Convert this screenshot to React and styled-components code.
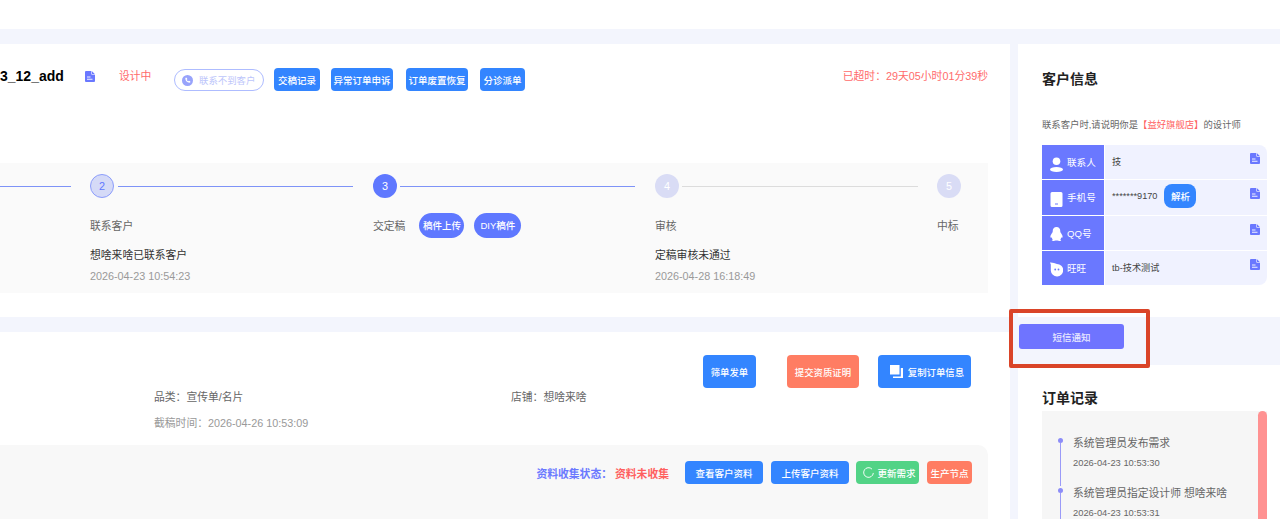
import React from "react";
import styled, { createGlobalStyle } from "styled-components";

const Global = createGlobalStyle`
  html, body { margin: 0; padding: 0; background: #f3f5fd; }
  body { width: 1280px; height: 519px; overflow: hidden; font-family: "Liberation Sans", "Noto Sans CJK SC", sans-serif; font-size: 10.8px; color: #333; }
  * { box-sizing: border-box; }
`;

const Page = styled.div`position: relative; width: 1280px; height: 519px; overflow: hidden;`;
const TopBar = styled.div`height: 29px; background: #fff; margin-bottom: 15px;`;
const Main = styled.div`display: grid; grid-template-columns: 1010px 262px; column-gap: 8px; width: 1280px;`;
const Column = styled.div`display: flex; flex-direction: column;`;
const LeftCard = styled.section`background: #fff; height: ${p => p.$h}px; margin-bottom: 15px;`;

const Header = styled.div`display: flex; align-items: flex-start; height: 119px; padding: 24px 22px 0 0;`;
const Title = styled.div`font-size: 14px; font-weight: 700; color: #000; line-height: 14px; margin-top: 1px; width: 85px;`;
const DocBox = styled.svg`width: 10px; height: 11px; fill: #6a78ff; display: block; flex: none;`;
const HeaderDoc = styled(DocBox)`margin-top: 3px;`;
const RowDoc = styled(DocBox)`position: absolute; right: 7px; top: 8px;`;
const Status = styled.div`color: #ff6b6b; font-size: 10.8px; line-height: 14px; margin: 1px 0 0 24px; width: 55px;`;
const Pill = styled.div`
  display: flex; align-items: center; gap: 6px; width: 90px; height: 22px; margin-top: 1px; padding-left: 7px;
  border: 1px solid #aebcff; border-radius: 11px; color: #bcc5fb; font-size: 9.4px; white-space: nowrap;
`;
const HeaderBtn = styled.button`
  height: 23px; margin-left: ${p => p.$ml}px; padding: 0; width: ${p => p.$w}px; border: 0; border-radius: 4px;
  background: #3385ff; color: #fff; font: inherit; font-size: 9.5px; font-weight: 500; white-space: nowrap;
`;
const Timer = styled.div`margin: 1px 0 0 auto; color: #ff6b6b; font-size: 10.8px; line-height: 14px;`;

const StepsPanel = styled.div`display: flex; width: 988px; height: 130px; background: #fafafa; padding-top: 11px;`;
const Step = styled.div`flex: none; width: ${p => p.$w}px;`;
const StepHead = styled.div`display: flex; align-items: center; height: 24px;`;
const Circle = styled.div`
  flex: none; width: 24px; height: 24px; border-radius: 50%; display: flex; align-items: center; justify-content: center;
  font-size: 10.8px; color: ${p => (p.$kind === "done" ? "#5f78ff" : "#fff")};
  background: ${p => (p.$kind === "active" ? "#5f78ff" : p.$kind === "done" ? "#d5daf7" : "#d9dcf5")};
  border: ${p => (p.$kind === "done" ? "1px solid #8c9dfb" : "0")};
`;
const Line = styled.div`
  flex: 1; height: 1px; margin-left: ${p => p.$ml}px; margin-right: ${p => p.$mr}px; background: ${p => (p.$on ? "#7e93f7" : "#dcdcdc")};
`;
const StepLabelRow = styled.div`display: flex; align-items: center; height: 26px; margin-top: 14px; color: #666;`;
const StepPill = styled.button`
  height: 25px; width: ${p => p.$w}px; margin-left: ${p => p.$ml}px; border: 0; border-radius: 13px; padding: 0;
  background: #5f78ff; color: #fff; font: inherit; font-size: 9.5px; font-weight: 500; white-space: nowrap;
`;
const StepDesc = styled.div`margin-top: 10px; line-height: 14px; color: #333;`;
const StepTime = styled.div`margin-top: 7px; line-height: 14px; color: #999;`;

const ActionRow = styled.div`display: flex; justify-content: flex-end; padding: 23px 39px 0 0;`;
const ActionBtn = styled.button`
  display: flex; align-items: center; justify-content: center; gap: 5px; height: 33px; width: ${p => p.$w}px; margin-left: ${p => p.$ml}px;
  border: 0; border-radius: 4px; padding: ${p => p.$pad || "0"}; background: ${p => p.$bg || "#3385ff"}; color: #fff; font: inherit; font-size: 9.4px; font-weight: 500; white-space: nowrap;
`;
const InfoRow = styled.div`display: flex; padding-left: 154px; height: 14px; margin-top: ${p => p.$mt}px; line-height: 14px; color: ${p => p.$c};`;
const InfoItem = styled.div`width: 357px;`;
const GreyPanel = styled.div`display: flex; align-items: center; justify-content: flex-end; width: 988px; height: 80px; margin-top: 15px; padding: 0 16px 25px 0; background: #f8f8f8; border-radius: 0 10px 0 0;`;
const StateLabel = styled.span`font-weight: 700; color: #6a78ff;`;
const StateValue = styled.span`font-weight: 700; color: #ff5f5f; margin-left: 3px; margin-right: 16px;`;
const SmallBtn = styled.button`
  display: flex; align-items: center; justify-content: center; gap: 3px; height: 23px; width: ${p => p.$w}px; margin-left: ${p => p.$ml || 0}px;
  border: 0; border-radius: 4px; padding: ${p => p.$pad || "0"}; background: ${p => p.$bg}; color: #fff; font: inherit; font-size: 9.5px; font-weight: 500; white-space: nowrap;
`;

const RightCard = styled.section`background: #fff; height: ${p => p.$h}px; padding: ${p => p.$p}; overflow: hidden;`;
const SideTitle = styled.h2`margin: 0; font-size: 14px; line-height: 16px; font-weight: 700; color: #222;`;
const Note = styled.p`margin: 31px 0 0; font-size: 9.35px; line-height: 14px; color: #666; white-space: nowrap; span { color: #ff5f5f; }`;
const Table = styled.div`margin-top: 13px; width: 225px; display: flex; flex-direction: column; gap: 1px;`;
const TRow = styled.div`display: flex; height: 34.25px;`;
const TLabel = styled.div`flex: none; width: 62px; display: flex; align-items: center; gap: 4px; padding-left: 8px; background: #6a78ff; color: #fff; font-size: 9.6px; white-space: nowrap; margin-right: 1px;`;
const TValue = styled.div`
  flex: 1; display: flex; align-items: center; padding: 0 7px 2px 7px; background: #f0f2ff; font-size: 9.2px; color: #444; position: relative;
  border-radius: ${p => p.$r || "0"};
`;
const Parse = styled.button`height: 24px; width: 32px; margin-left: 7px; border: 0; border-radius: 8px; padding: 0; background: #3385ff; color: #fff; font: inherit; font-size: 9.5px; font-weight: 500;`;
const Band = styled.div`height: 48px; padding: 7px 0 0 1px;`;
const Sms = styled.button`display: block; width: 105px; height: 25px; border: 0; border-radius: 3px; background: #6f74ff; color: #e9e9ff; font: inherit; font-size: 9.5px; font-weight: 500; padding: 0;`;
const Annotation = styled.div`position: absolute; left: 1009px; top: 309px; width: 141px; height: 59px; border: 4px solid #da4428; border-radius: 2px;`;
const LogPanel = styled.div`position: relative; width: 225px; height: 120px; margin-top: 5px; padding: 25px 0 0 18px; background: #f6f6f6;`;
const Thumb = styled.div`position: absolute; right: 0; top: 0; width: 9px; height: 120px; border-radius: 5px 5px 0 0; background: #ff9292;`;
const LogItem = styled.div`position: relative; height: 50px; padding-left: 13px;`;
const Dot = styled.i`position: absolute; left: -2px; top: 2px; width: 5px; height: 5px; border-radius: 50%; background: #8c8cf8;`;
const LogLine = styled.i`position: absolute; left: 0; top: 7px; width: 1px; height: 43px; background: #9a9af8;`;
const LogText = styled.div`font-size: 10.8px; line-height: 14px; color: #666; white-space: nowrap;`;
const LogTime = styled.div`margin-top: 6px; font-size: 9.36px; line-height: 14px; color: #666;`;

const docPaths = (
  <>
    <path d="M2 0h11.500L20 6.500V20a2 2 0 0 1-2 2H2a2 2 0 0 1-2-2V2a2 2 0 0 1 2-2z" />
    <path d="M13 0v6a1 1 0 0 0 1 1h6" fill="none" stroke="#fff" strokeWidth="1.200" />
    <path d="M4 12h7M4 16.500h11" stroke="#fff" strokeWidth="1.800" />
  </>
);
const LabelIcon = styled.svg`width: 13px; height: 15px; fill: #fff; flex: none; display: block; margin-top: 4px;`;
const Person = () => <LabelIcon viewBox="0 0 13 15"><circle cx="6.500" cy="4.200" r="3.800" /><ellipse cx="6.500" cy="12.500" rx="6.500" ry="2.500" /></LabelIcon>;
const Phone = () => <LabelIcon viewBox="0 0 13 15"><path d="M2 0h9a1.500 1.500 0 0 1 1.500 1.500v12A1.500 1.500 0 0 1 11 15H2a1.500 1.500 0 0 1-1.500-1.500v-12A1.500 1.500 0 0 1 2 0z" /><path d="M5 12h3" stroke="#6a78ff" /></LabelIcon>;
const Qq = () => <LabelIcon viewBox="0 0 13 15"><path d="M6.500 0c2.500 0 3.800 1.900 3.800 4.200 0 .6 0 1 .3 1.400.8 1.300 2.200 3 2 4.500-.2 1-.8.9-1.400.1 0 .9-.3 1.700-1 2.200.7.300 1.100.7.900 1.100-.3.600-2.600.6-3.700.1-.6-.2-1.200-.2-1.800 0-1.100.5-3.400.5-3.700-.1-.2-.4.200-.8.900-1.100-.7-.5-1-1.300-1-2.200-.6.800-1.200.9-1.400-.1-.2-1.500 1.200-3.200 2-4.500.3-.4.300-.8.300-1.400C2.700 1.900 4 0 6.500 0z" /></LabelIcon>;
const Wang = () => <LabelIcon viewBox="0 0 13 15"><path d="M7 2a6.200 6.200 0 1 1-6.200 6.500V2.500L0 .5c2.500-.3 4.800.9 7 1.500z" /><circle cx="5.200" cy="7.500" r=".9" fill="#6a78ff" /><circle cx="8.500" cy="7.500" r=".9" fill="#6a78ff" /></LabelIcon>;
const RoundIcon = styled.svg`width: 11px; height: 11px; flex: none; display: block; fill: #98a3fb;`;
const PhoneRound = () => <RoundIcon viewBox="0 0 16 16"><circle cx="8" cy="8" r="8" /><path d="M5 4l2 0 .8 2-1 1c.5 1 1.200 1.700 2.200 2.200l1-1 2 .8v2c-4 .8-7.800-3-7-7z" fill="#fff" /></RoundIcon>;
const CopySvg = styled.svg`width: 13px; height: 13px; fill: #fff; flex: none; display: block;`;
const Copy = () => <CopySvg viewBox="0 0 13 13"><rect width="9.500" height="9.500" /><path d="M10.800 3H13v10H3v-1.600h7.800z" /></CopySvg>;
const Refresh = () => <svg width="11" height="11" viewBox="0 0 12 12" fill="none" stroke="#fff" strokeWidth="1"><path d="M9.800 2.300A5.300 5.300 0 1 0 11.300 6.500" /></svg>;

const steps = [
  { w: 90, line: true, ml: 0, mr: 19 },
  { w: 283, n: 2, kind: "done", line: true, ml: 4, mr: 20, label: "联系客户", desc: "想啥来啥已联系客户", time: "2026-04-23 10:54:23" },
  { w: 282, n: 3, kind: "active", line: true, ml: 3, mr: 20, label: "交定稿", pills: true },
  { w: 282, n: 4, kind: "todo", line: false, ml: 3, mr: 19, label: "审核", desc: "定稿审核未通过", time: "2026-04-28 16:18:49" },
  { w: 51, n: 5, kind: "todo", label: "中标", last: true },
];

const contacts = [
  { icon: <Person />, label: "联系人", value: "技", r: "0 8px 0 0" },
  { icon: <Phone />, label: "手机号", value: "*******9170", parse: true },
  { icon: <Qq />, label: "QQ号", value: "" },
  { icon: <Wang />, label: "旺旺", value: "tb-技术测试", r: "0 0 8px 0" },
];

export default function App() {
  return (
    <Page>
      <Global />
      <TopBar />
      <Main>
        <Column>
          <LeftCard $h={273}>
            <Header>
              <Title>3_12_add</Title>
              <HeaderDoc viewBox="0 0 20 22">{docPaths}</HeaderDoc>
              <Status>设计中</Status>
              <Pill><PhoneRound />联系不到客户</Pill>
              <HeaderBtn $w={46} $ml={10}>交稿记录</HeaderBtn>
              <HeaderBtn $w={62} $ml={11}>异常订单申诉</HeaderBtn>
              <HeaderBtn $w={62} $ml={13}>订单废置恢复</HeaderBtn>
              <HeaderBtn $w={45} $ml={12}>分诊派单</HeaderBtn>
              <Timer>已超时：29天05小时01分39秒</Timer>
            </Header>
            <StepsPanel>
              {steps.map((s, i) => (
                <Step key={i} $w={s.w}>
                  <StepHead>
                    {s.n && <Circle $kind={s.kind}>{s.n}</Circle>}
                    {!s.last && <Line $on={s.line} $ml={s.ml} $mr={s.mr} />}
                  </StepHead>
                  {s.label && (
                    <StepLabelRow>
                      {s.label}
                      {s.pills && <><StepPill $w={45} $ml={14}>稿件上传</StepPill><StepPill $w={47} $ml={10}>DIY稿件</StepPill></>}
                    </StepLabelRow>
                  )}
                  {s.desc && <StepDesc>{s.desc}</StepDesc>}
                  {s.time && <StepTime>{s.time}</StepTime>}
                </Step>
              ))}
            </StepsPanel>
          </LeftCard>
          <LeftCard $h={187}>
            <ActionRow>
              <ActionBtn $w={53} $ml={0}>筛单发单</ActionBtn>
              <ActionBtn $w={72} $ml={31} $bg="#ff7d63">提交资质证明</ActionBtn>
              <ActionBtn $w={93} $ml={19} $pad="0 0 0 5px"><Copy />复制订单信息</ActionBtn>
            </ActionRow>
            <InfoRow $mt={2} $c="#666"><InfoItem>品类：宣传单/名片</InfoItem><InfoItem>店铺：想啥来啥</InfoItem></InfoRow>
            <InfoRow $mt={12} $c="#999"><InfoItem>截稿时间：2026-04-26 10:53:09</InfoItem></InfoRow>
            <GreyPanel>
              <StateLabel>资料收集状态：</StateLabel>
              <StateValue>资料未收集</StateValue>
              <SmallBtn $w={78} $bg="#3385ff">查看客户资料</SmallBtn>
              <SmallBtn $w={78} $ml={8} $bg="#3385ff">上传客户资料</SmallBtn>
              <SmallBtn $w={63} $ml={7} $bg="#52d386" $pad="0 0 0 4px"><Refresh />更新需求</SmallBtn>
              <SmallBtn $w={45} $ml={8} $bg="#ff7d63">生产节点</SmallBtn>
            </GreyPanel>
          </LeftCard>
        </Column>
        <Column>
          <RightCard $h={273} $p="27px 0 0 24px">
            <SideTitle>客户信息</SideTitle>
            <Note>联系客户时,请说明你是<span>【益好旗舰店】</span>的设计师</Note>
            <Table>
              {contacts.map(c => (
                <TRow key={c.label}>
                  <TLabel>{c.icon}{c.label}</TLabel>
                  <TValue $r={c.r}>
                    {c.value}
                    {c.parse && <Parse>解析</Parse>}
                    <RowDoc viewBox="0 0 20 22">{docPaths}</RowDoc>
                  </TValue>
                </TRow>
              ))}
            </Table>
          </RightCard>
          <Band><Sms>短信通知</Sms></Band>
          <RightCard $h={154} $p="25px 0 0 24px">
            <SideTitle>订单记录</SideTitle>
            <LogPanel>
              <Thumb />
              <LogItem><Dot /><LogLine /><LogText>系统管理员发布需求</LogText><LogTime>2026-04-23 10:53:30</LogTime></LogItem>
              <LogItem><Dot /><LogLine /><LogText>系统管理员指定设计师 想啥来啥</LogText><LogTime>2026-04-23 10:53:31</LogTime></LogItem>
            </LogPanel>
          </RightCard>
        </Column>
      </Main>
      <Annotation />
    </Page>
  );
}
